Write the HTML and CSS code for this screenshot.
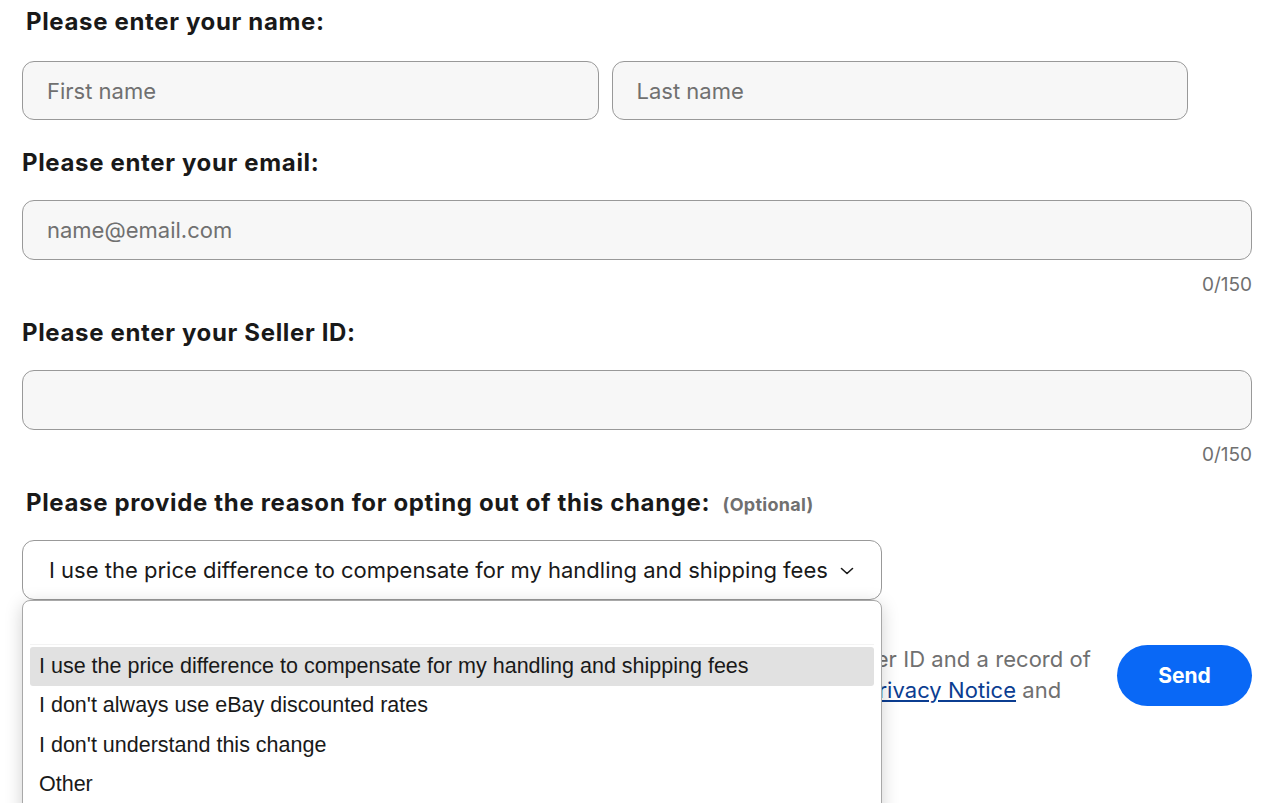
FILE: index.html
```html
<!DOCTYPE html>
<html lang="en">

<head>
    <meta charset="UTF-8">
    <meta name="viewport" content="width=device-width, initial-scale=1.0">
    <title>Opt out request</title>
    <link rel="stylesheet" href="styles.css">
</head>

<body>

    <form class="optout-form">
        <!-- Name -->
        <div class="field-label indent top">Please enter your name:</div>
        <div class="name-row">
            <input type="text" class="textbox" placeholder="First name">
            <input type="text" class="textbox" placeholder="Last name">
        </div>

        <!-- Email -->
        <div class="field-label spaced">Please enter your email:</div>
        <input type="text" class="textbox" placeholder="name@email.com">
        <div class="counter">0/150</div>

        <!-- Seller ID -->
        <div class="field-label">Please enter your Seller ID:</div>
        <input type="text" class="textbox">
        <div class="counter">0/150</div>

        <!-- Reason -->
        <div class="field-label indent">Please provide the reason for opting out of this change: <span class="optional">(Optional)</span></div>
        <div class="select-wrap">
            <div class="select-box">
                <span>I use the price difference to compensate for my handling and shipping fees</span>
                <svg class="chevron" width="14" height="8" viewBox="0 0 14 8">
                    <path d="M1.5 1.5l5.5 5 5.5-5" fill="none" stroke="#191919" stroke-width="1.6" stroke-linecap="round" stroke-linejoin="round" />
                </svg>
            </div>

            <!-- Open option list -->
            <ul class="option-list">
                <li class="option blank"></li>
                <li class="option selected">I use the price difference to compensate for my handling and shipping fees</li>
                <li class="option">I don't always use eBay discounted rates</li>
                <li class="option">I don't understand this change</li>
                <li class="option">Other</li>
            </ul>
        </div>

        <div class="submit-row">
            <p class="disclaimer">
                By selecting Send, you agree that eBay can collect your name, email address, Seller ID and a record of<br>
                this opt-out request. eBay will only use this information as described in our User <a href="#">Privacy Notice</a> and<br>
                User Agreement.
            </p>
            <button type="button" class="send-btn">Send</button>
        </div>
    </form>

</body>

</html>
```

FILE: styles.css
```css
html {
    overflow: hidden;
}

body {
    font-family: Inter, "Open Sans", Arial, sans-serif;
    margin: 0;
    padding: 0;
    min-height: 100vh;
    background-color: #ffffff;
    color: #191919;
}

.optout-form {
    padding: 0 10px 0 22px;
}

.field-label {
    font-size: 24px;
    font-weight: 700;
    line-height: 28px;
    letter-spacing: 0.65px;
    margin-bottom: 23px;
}

.field-label.top {
    padding-top: 8px;
    margin-bottom: 25px;
}

.field-label.spaced {
    margin-top: 29px;
}

.field-label.indent {
    padding-left: 4px;
}

.optional {
    font-size: 18px;
    line-height: 1;
    letter-spacing: 0.3px;
    color: #707070;
    margin-left: 6px;
}

.name-row {
    display: flex;
    gap: 13px;
    width: 1166px;
}

.textbox {
    display: block;
    box-sizing: border-box;
    width: 100%;
    height: 60px;
    padding: 0 25px 0 24px;
    font-family: inherit;
    font-size: 22px;
    color: #191919;
    background-color: #f7f7f7;
    border: 1px solid #999999;
    border-radius: 12px;
    outline: none;
}

.name-row .textbox {
    height: 59px;
}

.textbox::placeholder {
    color: #707070;
}

.counter {
    font-size: 19px;
    line-height: 20px;
    color: #707070;
    text-align: right;
    margin: 15px 0 24px;
}

.select-wrap {
    position: relative;
    width: 860px;
}

.select-box {
    box-sizing: border-box;
    height: 60px;
    display: flex;
    align-items: center;
    gap: 12px;
    padding: 0 20px 0 26px;
    font-size: 22px;
    white-space: nowrap;
    background-color: #ffffff;
    border: 1px solid #999999;
    border-radius: 12px;
}

.chevron {
    flex-shrink: 0;
    margin-top: 2px;
}

.option-list {
    position: absolute;
    top: 60px;
    left: 0;
    z-index: 2;
    box-sizing: border-box;
    width: 860px;
    height: 240px;
    margin: 0;
    padding: 3px 7px 0;
    list-style: none;
    font-family: "Liberation Sans", Arial, sans-serif;
    font-size: 21.5px;
    color: #191919;
    background-color: #ffffff;
    border: 1px solid #a8a8a8;
    border-radius: 8px 8px 0 0;
    box-shadow: 0 4px 18px rgba(0, 0, 0, 0.18);
}

.option {
    height: 39.3px;
    line-height: 39.3px;
    padding: 0 9px;
    border-radius: 3px;
    white-space: nowrap;
}

.option.blank {
    height: 40px;
    border-bottom: 1px solid #f3f3f3;
    border-radius: 0;
    margin-bottom: 2px;
}

.option.selected {
    background-color: #e1e1e1;
}

.submit-row {
    display: flex;
    align-items: flex-start;
    gap: 24px;
    margin-top: 44px;
}

.disclaimer {
    flex: 1;
    margin: 0;
    font-size: 22px;
    line-height: 31px;
    letter-spacing: 0.05px;
    color: #707070;
    white-space: nowrap;
    overflow: hidden;
}

.disclaimer a {
    color: #0b3d91;
    text-decoration: underline;
}

.send-btn {
    flex-shrink: 0;
    width: 135px;
    height: 61px;
    margin-top: 1px;
    font-family: inherit;
    font-size: 21px;
    font-weight: 700;
    color: #ffffff;
    background-color: #0968f6;
    border: none;
    border-radius: 31px;
    cursor: pointer;
}
```
